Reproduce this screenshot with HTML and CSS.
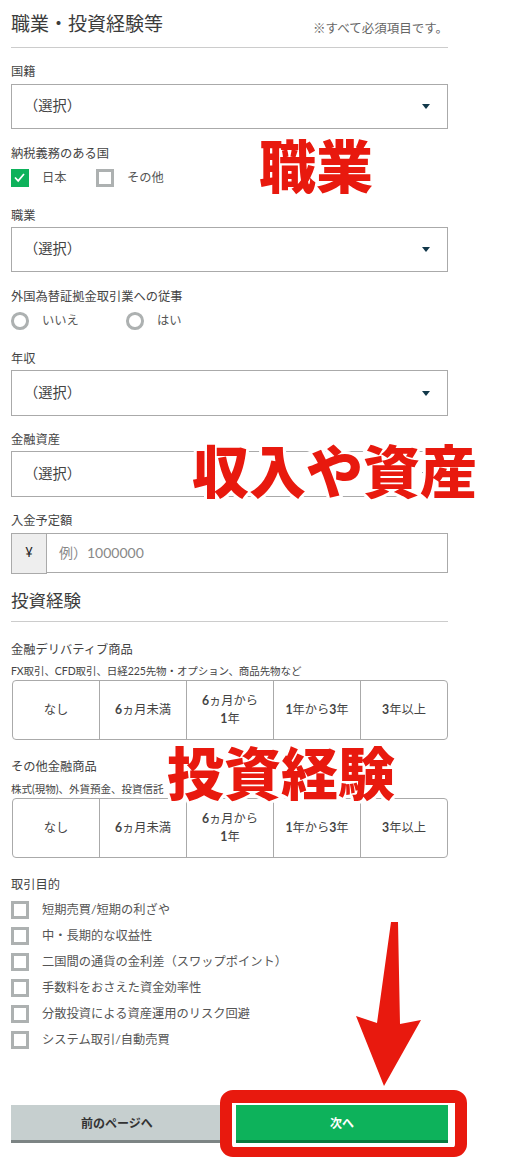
FILE: index.html
```html
<!DOCTYPE html>
<html lang="ja">
<head>
<meta charset="utf-8">
<title>職業・投資経験等</title>
<link rel="stylesheet" href="styles.css">
</head>
<body>
<main class="page">
  <header class="head">
    <h1 class="title">職業・投資経験等</h1>
    <span class="note">※すべて必須項目です。</span>
  </header>

  <div class="label l-nat">国籍</div>
  <div class="select"><span>（選択）</span><i class="caret"></i></div>

  <div class="label l-tax">納税義務のある国</div>
  <div class="choices">
    <span class="choice w-tax"><i class="box on"><svg viewBox="0 0 17 17" width="17" height="17"><path d="M4 8.5l3.2 3.4L13 5" fill="none" stroke="#fff" stroke-width="1.7"/></svg></i>日本</span>
    <span class="choice"><i class="box"></i>その他</span>
  </div>

  <div class="label l-job">職業</div>
  <div class="select"><span>（選択）</span><i class="caret"></i></div>

  <div class="label l-fx">外国為替証拠金取引業への従事</div>
  <div class="choices">
    <span class="choice w-fx"><i class="radio"></i>いいえ</span>
    <span class="choice"><i class="radio"></i>はい</span>
  </div>

  <div class="label l-inc">年収</div>
  <div class="select tall"><span>（選択）</span><i class="caret"></i></div>

  <div class="label l-asset">金融資産</div>
  <div class="select tall"><span>（選択）</span><i class="caret"></i></div>

  <div class="label l-dep">入金予定額</div>
  <div class="amount">
    <span class="yen">¥</span>
    <span class="ph"><span class="ph-text">例）1000000</span></span>
  </div>

  <header class="head2"><h2 class="title2">投資経験</h2></header>

  <div class="label l-der">金融デリバティブ商品</div>
  <div class="sub tight">FX取引、CFD取引、日経225先物・オプション、商品先物など</div>
  <div class="seg">
    <div class="cell"><span>なし</span></div>
    <div class="cell"><span><b>6</b>ヵ月未満</span></div>
    <div class="cell"><span><b>6</b>ヵ月から<br><b>1</b>年</span></div>
    <div class="cell"><span><b>1</b>年から<b>3</b>年</span></div>
    <div class="cell"><span><b>3</b>年以上</span></div>
  </div>

  <div class="label l-oth">その他金融商品</div>
  <div class="sub">株式(現物)、外貨預金、投資信託</div>
  <div class="seg">
    <div class="cell"><span>なし</span></div>
    <div class="cell"><span><b>6</b>ヵ月未満</span></div>
    <div class="cell"><span><b>6</b>ヵ月から<br><b>1</b>年</span></div>
    <div class="cell"><span><b>1</b>年から<b>3</b>年</span></div>
    <div class="cell"><span><b>3</b>年以上</span></div>
  </div>

  <div class="label l-pur">取引目的</div>
  <ul class="purposes">
    <li class="choice"><i class="box"></i>短期売買/短期の利ざや</li>
    <li class="choice"><i class="box"></i>中・長期的な収益性</li>
    <li class="choice"><i class="box"></i>二国間の通貨の金利差（スワップポイント）</li>
    <li class="choice"><i class="box"></i>手数料をおさえた資金効率性</li>
    <li class="choice"><i class="box"></i>分散投資による資産運用のリスク回避</li>
    <li class="choice"><i class="box"></i>システム取引/自動売買</li>
  </ul>

  <div class="buttons">
    <button class="btn prev">前のページへ</button>
    <button class="btn next">次へ</button>
  </div>

  <div class="big b1">職業</div>
  <div class="big b2">収入や資産</div>
  <div class="big b3">投資経験</div>
  <div class="hilite"></div>
  <svg class="arrow" viewBox="0 0 70 170" width="70" height="170"><polygon points="38,2 45,2 47,104 68,100 31,166 3,96 24,103" fill="#e8190e"/></svg>
</main>
</body>
</html>
```

FILE: styles.css
```css
* { box-sizing: border-box; }
html, body { margin: 0; padding: 0; background: #fff; }
body {
  height: 1157px;
  overflow: hidden;
  font-family: "Lato", "Noto Sans CJK JP", sans-serif;
  color: #444;
}
.page { position: relative; height: 1157px; padding: 0 63px 0 11px; }

.head {
  display: flex;
  justify-content: space-between;
  align-items: flex-end;
  height: 48px;
  padding-bottom: 10px;
  border-bottom: 1px solid #ccc;
}
.title { margin: 0; font-size: 19px; font-weight: 400; line-height: 26px; color: #3c3c3c; }
.note { font-size: 12.5px; line-height: 18px; margin-bottom: -1px; color: #666; }

.label { font-size: 12.25px; line-height: 18px; color: #444; }
.l-nat { margin: 15px 0 3px; }
.l-tax { margin: 16px 0 6px; }
.l-job { margin: 20px 0 2px; }
.l-fx { margin: 16px 0 6px; }
.l-inc { margin: 20px 0 2px; }
.l-asset { margin: 15px 0 2px; }
.l-dep { margin: 15px 0 3px; }
.l-der { margin: 19px 0 4px; }
.l-oth { margin: 18px 0 5px; }
.l-pur { margin: 18px 0 7px; }

.select {
  display: flex;
  align-items: center;
  justify-content: space-between;
  height: 45px;
  padding: 0 17px 0 12px;
  border: 1px solid #aaa;
  font-size: 14.25px;
  color: #444;
}
.select span { margin-bottom: 4px; }
.select.tall { height: 46px; }
.caret {
  width: 0; height: 0;
  border-left: 4.5px solid transparent;
  border-right: 4.5px solid transparent;
  border-top: 5px solid #12384a;
}

.choices { display: flex; height: 18px; }
.choice { display: flex; align-items: center; font-size: 12.25px; line-height: 18px; color: #555; }
.w-tax { width: 85px; }
.w-fx { width: 115px; }

.box {
  flex: none;
  width: 17.5px; height: 17.5px;
  margin-right: 13.5px;
  border: 3px solid #adb1b1;
  background: #fff;
}
.box.on { border: 0; background: #0db25b; }
.box svg { display: block; }
.radio {
  flex: none;
  width: 17.5px; height: 17.5px;
  margin-right: 13.5px;
  border: 3px solid #adb1b1;
  border-radius: 50%;
}

.amount {
  display: flex;
  align-items: stretch;
  height: 40px;
  border: 1px solid #aaa;
  font-size: 14px;
}
.yen {
  flex: none;
  width: 36px;
  height: 41px;
  margin: -1px 0 -1px -1px;
  border: 1px solid #aaa;
  background: #eee;
  display: flex;
  align-items: center;
  justify-content: center;
  padding-bottom: 3px;
  font-size: 13px;
  color: #222;
}
.ph { display: flex; align-items: center; padding-left: 12px; color: #888; }
.ph-text { margin-bottom: 3px; }

.head2 { height: 49px; border-bottom: 1px solid #ccc; padding-top: 16px; }
.title2 { margin: 0; font-size: 17.5px; font-weight: 400; line-height: 24px; color: #3c3c3c; }

.sub { font-size: 10.5px; line-height: 16px; color: #444; white-space: nowrap; }
.tight { letter-spacing: -0.08px; }

.seg {
  display: grid;
  grid-template-columns: repeat(4, 87px) 1fr;
  height: 60px;
  margin: 1px 0 0 1px;
  border: 1px solid #aaa;
  border-radius: 4px;
}
.cell {
  display: flex;
  align-items: center;
  justify-content: center;
  text-align: center;
  font-size: 12.25px;
  line-height: 18px;
  color: #444;
  border-right: 1px solid #aaa;
}
.cell:last-child { border-right: 0; }
.cell b { font-weight: 700; }

.purposes { list-style: none; margin: 0; padding: 0; display: flex; flex-direction: column; gap: 8px; }
.purposes .choice { height: 18px; }

.buttons { display: flex; gap: 13px; margin-top: 56px; }
.btn {
  width: 212px;
  height: 38px;
  padding: 0;
  border: 0;
  border-bottom: 3px solid #7c8484;
  border-radius: 0;
  background: #c6cfcf;
  font: 700 12px "Lato", "Noto Sans CJK JP", sans-serif;
  color: #333;
}
.next { background: #0db25b; border-bottom-color: #0a7a40; color: #fff; }

.big {
  position: absolute;
  font-family: "Noto Sans CJK JP", sans-serif;
  font-weight: 900;
  font-size: 57px;
  line-height: 57px;
  white-space: nowrap;
  color: #e8190e;
  -webkit-text-stroke: 6px #fff;
  paint-order: stroke fill;
}
.b1 { left: 259px; top: 135px; }
.b2 { left: 192px; top: 440px; }
.b3 { left: 167px; top: 742px; }

.hilite {
  position: absolute;
  left: 220px;
  top: 1090px;
  width: 247px;
  height: 67px;
  border: 12px solid #e8190e;
  border-top-width: 13px;
  border-bottom-width: 10px;
  border-radius: 13px;
}
.arrow { position: absolute; left: 353px; top: 920px; }
```
